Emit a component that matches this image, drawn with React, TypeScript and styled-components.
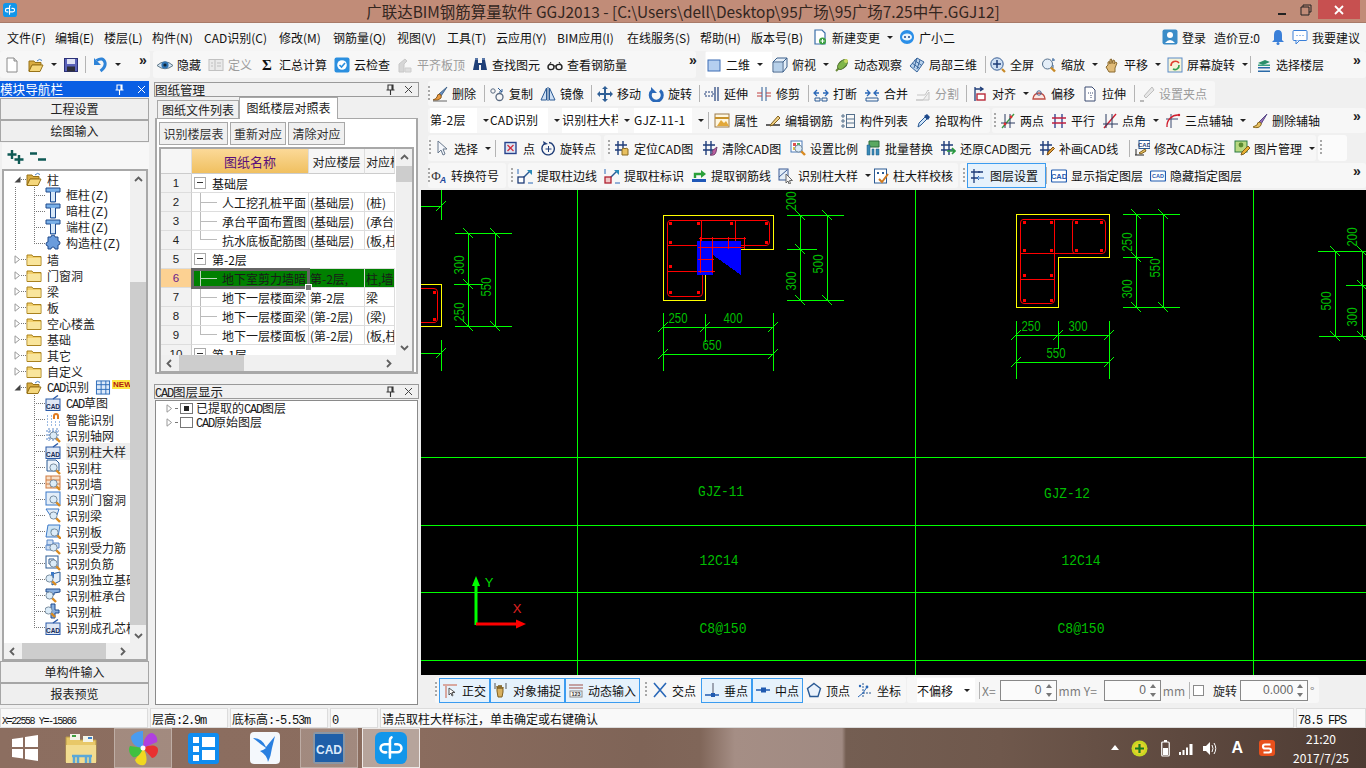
import React from "react";
import styled, { createGlobalStyle } from "styled-components";

const CJK = `"Noto Sans CJK SC", "Noto Sans", sans-serif`;

const Global = createGlobalStyle`
  html, body { margin: 0; padding: 0; width: 1366px; height: 768px; overflow: hidden; background: #f0f0f0; }
  * { box-sizing: border-box; }
  body { font-family: ${CJK}; font-size: 12px; color: #111; }
`;

/* ---------- icons ---------- */
const mag = (x = 0, y = 0) => (
  <g transform={`translate(${x} ${y})`}>
    <path d="M11 11l4 4" stroke="#d98a20" strokeWidth="2.4" />
    <circle cx="8.5" cy="8.5" r="3.6" fill="#dcecf8" stroke="#7a8ea0" />
  </g>
);
const cadDoc = (
  <>
    <rect x="1" y="4" width="14" height="11.5" fill="#dfe8f5" stroke="#2a5aa8" />
    <path d="M8 4l5-3.5" stroke="#2a5aa8" strokeWidth="1.4" />
    <text x="8" y="13.5" fontSize="6.5" fontWeight="700" fontFamily="Liberation Sans" textAnchor="middle" fill="#152a55">CAD</text>
  </>
);
const hash = (c = "#1f3d7a") => (
  <path d="M4 1v14M9 1v14M1 5h12M1 10h12" stroke={c} strokeWidth="1.4" fill="none" />
);
const folderClosed = (
  <>
    <path d="M1 4h5l1 1.5h8v9H1z" fill="#f2cf6a" stroke="#a9821f" />
    <path d="M1.5 7h13v7h-13z" fill="#f9e59c" />
  </>
);
const I: Record<string, React.ReactNode> = {
  new: (<><path d="M3 1h7l3 3v11H3z" fill="#fff" stroke="#8a8a8a" /><path d="M10 1v3h3" fill="#ddd" stroke="#8a8a8a" /></>),
  open: (<><path d="M1 4h5l1 1.5h6V8H4l-3 6z" fill="#d9ac42" stroke="#987318" /><path d="M4 8h11l-3 6.5H1z" fill="#f5d77c" stroke="#987318" /><path d="M9 4q2.5-3 5-.5" stroke="#4a84c4" fill="none" /></>),
  save: (<><rect x="1.5" y="1.5" width="13" height="13" fill="#5a62b8" stroke="#2c3278" /><rect x="4" y="2" width="8" height="5" fill="#dfe2f4" /><rect x="4" y="9.5" width="8" height="5" fill="#2e2e3a" /></>),
  undo: (<><path d="M4.5 3.5Q11-.5 13 5.5 14 10 8.5 14" stroke="#2f84d8" strokeWidth="3" fill="none" /><path d="M2 1v7h7z" fill="#2f84d8" /></>),
  eye: (<><path d="M0 8.5Q8 1 16 8.5 8 15 0 8.5z" fill="#d4e4f2" stroke="#607888" /><circle cx="8" cy="8" r="3.6" fill="#2f74b4" /><circle cx="8" cy="8" r="1.6" fill="#102638" /></>),
  def: (<><rect x="1" y="2.5" width="14" height="11" fill="#e8e8e8" stroke="#b4b4b4" /><path d="M7 3v10M3 6h2M3 9h2M9 6h4M9 9h4" stroke="#b0b0b0" /></>),
  sigma: (<text x="8" y="13" fontSize="15" fontWeight="700" fontFamily="Liberation Serif" textAnchor="middle" fill="#111">Σ</text>),
  cloud: (<><rect x="0.5" y="0.5" width="15" height="15" rx="2" fill="#2b8fdf" /><circle cx="8" cy="8" r="4.8" fill="#fff" /><path d="M5.5 8l2 2 3.5-4" stroke="#2b8fdf" strokeWidth="1.6" fill="none" /></>),
  flush: (<><path d="M2 15V7l6-5 2 2-3 3v8z" fill="#cfcfcf" stroke="#bdbdbd" /><path d="M8 15v-4h6v4z" fill="#d8d8d8" stroke="#c4c4c4" /></>),
  binoc: (<><path d="M3 3h3v3h4V3h3l2 10H9V8H7v5H1z" fill="#1f3f78" /><rect x="3" y="1" width="3" height="2" fill="#5a78a8" /><rect x="10" y="1" width="3" height="2" fill="#5a78a8" /></>),
  glasses: (<><ellipse cx="4" cy="10" rx="3" ry="2.6" fill="none" stroke="#222" strokeWidth="1.4" /><ellipse cx="12" cy="10" rx="3" ry="2.6" fill="none" stroke="#222" strokeWidth="1.4" /><path d="M7 9h2M2 8L4 5M14 8l-2-3" stroke="#222" /></>),
  plane: (<rect x="2" y="3" width="12" height="11" fill="#b5cff0" stroke="#3c6db4" />),
  persp: (<><path d="M1 5l4-4h10v9l-4 5H1z" fill="#e4eef8" stroke="#3a5f8a" /><path d="M1 5h10v10M11 5l4-4" stroke="#3a5f8a" fill="none" /><path d="M2 6h8v8H2z" fill="#b6d0ea" /></>),
  orbit: (<><path d="M2 14L13 3" stroke="#6a8a3a" strokeWidth="2" /><ellipse cx="8.5" cy="7.5" rx="6" ry="3.5" transform="rotate(-45 8.5 7.5)" fill="#7fb548" stroke="#4a6a2a" /><circle cx="12" cy="4" r="2" fill="#c8d860" /></>),
  local3d: (<><path d="M8 1l7 4-7 10-7-6z" fill="#b9d2ec" stroke="#39669c" /><path d="M5 3l7 5M3 6l7 5M8 1L5 11M11 3l-3 9" stroke="#39669c" fill="none" /></>),
  full: (<><circle cx="7" cy="7" r="6.2" fill="#cfe0f4" stroke="#3a5f94" /><path d="M7 3v8M3 7h8" stroke="#1f3d78" strokeWidth="1.5" /><path d="M12 12l3 3" stroke="#c88a28" strokeWidth="2.2" /></>),
  zoom: (<><circle cx="6.5" cy="7" r="5" fill="#e4eef8" stroke="#55708c" /><path d="M10 10.5l4 4" stroke="#c88a28" strokeWidth="2.4" /><path d="M12 1v3M14 3h-3M12 8v3" stroke="#39669c" /></>),
  pan: (<path d="M4 8V5l1.5-.5L6 7V2.5L7.5 2 8 6.5 9 3l1.5.5L10 7l1.5-2L13 6l-2 5v4H5l-3-5 1-1z" fill="#e0bb78" stroke="#8a6a30" />),
  srot: (<><rect x="1" y="1" width="14" height="14" fill="#f7f3d8" stroke="#5a8cc8" /><path d="M4 9a4.5 4.5 0 0 1 8-3" stroke="#e04030" strokeWidth="1.6" fill="none" /><path d="M12 8a4 4 0 0 1-6 4" stroke="#30a050" strokeWidth="1.6" fill="none" /></>),
  layersel: (<><path d="M2 6l7-3 5 2-7 3z" fill="#2b8f6a" /><path d="M2 10h12v1.5H2z" fill="#2a6aa8" /><path d="M2 13.5h12V15H2z" fill="#2a6aa8" /><path d="M2 7.5h12V9H2z" fill="#36a080" /></>),
  del: (<><path d="M15 1L7 8l2 2z" fill="#6a92c8" stroke="#44668c" /><path d="M8 8q-3 0-3 3-1 2-4 3 6 1 8-2 1-2-1-4z" fill="#e89a40" stroke="#8a5a20" /><path d="M1 15h14" stroke="#666" /></>),
  copy: (<><circle cx="4" cy="5" r="2.2" fill="none" stroke="#5a6a80" /><circle cx="10.5" cy="11" r="3.5" fill="none" stroke="#5a6a80" strokeWidth="1.3" /><path d="M9 2l4 4M13 3v3h-3" stroke="#2a5a94" fill="none" /></>),
  mirror: (<><path d="M6.5 2L1 14h5.5z" fill="#cfe0f4" stroke="#2a5a94" /><path d="M9.5 2L15 14H9.5z" fill="#cfe0f4" stroke="#2a5a94" /><path d="M8 1v14" stroke="#2a5a94" /></>),
  move: (<path d="M8 0l3 3H9v4h4V5l3 3-3 3V9H9v4h2l-3 3-3-3h2V9H3v2L0 8l3-3v2h4V3H5z" fill="#2f5f96" />),
  rotate: (<><path d="M4.5 4.5a6 6 0 1 0 7.5 0" stroke="#2a68b8" strokeWidth="3" fill="none" /><path d="M3 1v6h6z" fill="#2a68b8" /></>),
  extend: (<><path d="M14 1v14M11 1v14" stroke="#1f3d78" strokeWidth="1.2" /><path d="M1 6h8v4H1z" fill="none" stroke="#1f3d78" strokeDasharray="2 1" /></>),
  trim: (<><path d="M6 1v14M10 1v14" stroke="#2a5a94" /><path d="M1 7h5M1 10h5M10 7h5M10 10h5" stroke="#c04040" /></>),
  brk: (<><path d="M2 12h5v3H2zM9 12h5v3H9z" fill="none" stroke="#2a5a94" /><path d="M1 7h5M10 7h5M4 4L1 7l3 3M12 4l3 3-3 3" stroke="#2a68b8" fill="none" strokeWidth="1.3" /></>),
  merge: (<><path d="M2 12h12v3H2z" fill="none" stroke="#2a5a94" /><path d="M1 7h5M10 7h5M3 4l3 3-3 3M13 4l-3 3 3 3" stroke="#2a68b8" fill="none" strokeWidth="1.3" /></>),
  split: (<><path d="M1 14h13V6L8 14H1z" fill="#eee" stroke="#bbb" /><path d="M2 9h8l3-5 1 1" stroke="#bbb" fill="none" /></>),
  align: (<><path d="M3 1v14M3 3l8 0M8 1l3 2-3 2" stroke="#1f3d78" fill="none" strokeWidth="1.3" /><rect x="5" y="8" width="8" height="6" fill="#fff" stroke="#b82838" strokeWidth="1.4" /></>),
  offset: (<><path d="M2 13a6 6 0 1 1 12 0z" fill="#fbe8e4" stroke="#c05048" strokeWidth="1.4" /><circle cx="8" cy="7" r="2.2" fill="none" stroke="#406090" /></>),
  stretch: (<><path d="M3 1h7l3 3v11H3z" fill="#fff" stroke="#3a4a70" /><path d="M6 7h6M9 9v3" stroke="#3a4a70" strokeDasharray="1 1" /></>),
  grippt: (<><path d="M13 1L5 10l2 2 8-8z" fill="#e4e4e4" stroke="#b0b0b0" /><path d="M1 15h4" stroke="#aaa" strokeWidth="2" /></>),
  prop: (<><rect x="1" y="1" width="14" height="13" fill="#fff7e0" stroke="#9a7a4a" /><path d="M1 5h14" stroke="#c8922a" strokeWidth="2" /><path d="M3 13l4-6 3 3 2-2 3 5z" fill="#e2a83a" /></>),
  rebar: (<><path d="M1 12h14" stroke="#222" strokeWidth="1.4" /><path d="M6 11l7-8 2 2-7 7-3 1z" fill="#f0d080" stroke="#806020" /></>),
  list: (<><path d="M2 2h2v2H2zM2 7h2v2H2zM2 12h2v2H2z" fill="none" stroke="#55708c" /><rect x="6.5" y="1.5" width="8" height="13" fill="none" stroke="#55708c" /><path d="M7 6h7M7 10h7" stroke="#55708c" /></>),
  pick: (<><path d="M3 14l1-4 6-6 2 2-6 6z" fill="#cfe4f8" stroke="#2a5a94" /><path d="M9 3l3-2 3 3-2 3z" fill="#1f4a8c" /></>),
  twopt: (<><path d="M2 15L14 1" stroke="#3a9a40" strokeWidth="1.3" /><path d="M5 1v14M10 1v14M1 10h14" stroke="#2a3a60" /><circle cx="5" cy="11" r="1.4" fill="#e03030" /><circle cx="11" cy="4" r="1.4" fill="#e03030" /></>),
  parallel: (<><path d="M4 1v14M11 1v14" stroke="#2a3a8a" strokeWidth="1.3" /><path d="M1 5h14M1 10h14" stroke="#c02040" strokeWidth="1.3" /></>),
  angle: (<><path d="M2 15L14 1" stroke="#d02030" strokeWidth="1.4" /><path d="M1 11h15M4 1v14M10 1v14" stroke="#2a3a60" /></>),
  threeax: (<><path d="M1 6h12M6 1v14" stroke="#3a4a70" /><path d="M2 14a11 11 0 0 1 12-12" stroke="#d02030" strokeWidth="1.4" fill="none" /><circle cx="14" cy="2" r="1.2" fill="#d02030" /></>),
  delax: (<><path d="M15 1L7 9l2 2z" fill="#9a70b8" stroke="#5a4a88" /><path d="M8 9q-3 0-3 3l-4 2q6 2 8-2 1-1-1-3z" fill="#e8c060" stroke="#8a6a20" /></>),
  cursor: (<path d="M4 1v12l3-3 2 5 2-1-2-5h4z" fill="#f4f7fc" stroke="#68788c" />),
  point: (<><rect x="2" y="2.5" width="11" height="11" fill="#dde6f5" stroke="#27428c" strokeWidth="1.4" /><path d="M4.5 5l6 6M10.5 5l-6 6" stroke="#d03040" strokeWidth="1.3" /></>),
  rotpt: (<><path d="M4 4a6.2 6.2 0 1 0 5-1.5" stroke="#1f3d78" strokeWidth="1.4" fill="none" /><path d="M3 1l1 4 4-1z" fill="#1f3d78" /><path d="M8.5 6v6M5.5 9h6" stroke="#1f3d78" /></>),
  locate: (<>{hash("#1f3d7a")}<path d="M8 15V9l2-1 1 1 1-1 2 1v6z" fill="#e8c060" stroke="#8a6a20" /></>),
  clear: (<>{hash("#1f3d7a")}<path d="M15 7l-5 4 1 2-3 2q5 1 6-3z" fill="#c060a0" stroke="#704070" /></>),
  scale: (<><rect x="1" y="1" width="11" height="11" fill="#fff" stroke="#4a7ab8" /><path d="M3 3h3v3H3z" fill="#e05050" /><path d="M7 3h3v3H7z" fill="#50b060" /><path d="M3 7h3v3H3z" fill="#e8c040" />{mag()}</>),
  batch: (<><path d="M4 1h10v6H4z" fill="#5aa860" stroke="#2a6a38" /><path d="M2 5v10h3V5zM7 9v6h2V9zM11 9v6h3V9z" fill="#3a8ab8" stroke="#1f5a80" strokeWidth=".5" /></>),
  restore: (<>{hash("#1f3d7a")}<path d="M7 11h8M12 8l3 3-3 3" stroke="#2a9a40" strokeWidth="1.6" fill="none" /></>),
  redraw: (<>{hash("#1f3d7a")}<path d="M8 15l1-3 5-5 1.5 1.5-5 5z" fill="#e0a040" stroke="#805010" /></>),
  editcad: (<><rect x="5" y="0.5" width="11" height="8" fill="#fff" stroke="#2a5a94" /><text x="10.5" y="7" fontSize="6" fontWeight="700" fontFamily="Liberation Sans" textAnchor="middle" fill="#1f3d78">CAD</text><path d="M1 15h9M2 9v6" stroke="#222" /><path d="M5 13l6-4 1 2-5 3z" fill="#e8c060" stroke="#806020" /></>),
  imgm: (<><rect x="1" y="1" width="12" height="11" fill="#b8d880" stroke="#2a7a40" /><circle cx="7" cy="5" r="2.4" fill="#5a8a30" /><path d="M7 15l1-3 6-6 2 2-6 6z" fill="#e8b030" stroke="#806020" /></>),
  symbol: (<><text x="5" y="12" fontSize="13" fontFamily="Liberation Serif" textAnchor="middle" fill="#333">Φ</text><text x="12" y="15" fontSize="9" fontWeight="700" fontStyle="italic" fontFamily="Liberation Sans" textAnchor="middle" fill="#1f4a9c">A</text></>),
  xedge: (<><path d="M2 14L13 3" stroke="#2a5a94" strokeWidth="1.5" /><rect x="1" y="9" width="6" height="6" fill="#fff" stroke="#1f3d78" strokeWidth="1.3" /><path d="M10 2h5v5z" fill="#2a8ab8" /><path d="M1 1v5M11 15h5" stroke="#2a68b8" /></>),
  xlabel: (<><path d="M2 14L13 3" stroke="#2a5a94" strokeWidth="1.5" /><rect x="1" y="9" width="6" height="6" fill="#f0c8c8" stroke="#b02030" strokeWidth="1.3" /><path d="M10 2h5v5z" fill="#2a8ab8" /><path d="M1 1v5M11 15h5" stroke="#2a68b8" /></>),
  xrebar: (<><rect x="1" y="11" width="14" height="3" fill="#2058b8" /><path d="M4 10V6h7" stroke="#2aa03a" strokeWidth="2.4" fill="none" /><path d="M10 2l5 4-5 4z" fill="#2aa03a" /></>),
  recog: (<><rect x="1" y="1" width="9" height="11" fill="#e4eef8" stroke="#3a5a94" /><path d="M1 9l8-7" stroke="#3a5a94" /><path d="M8 6v9l2-2 1 3 1.5-.5-1-3h3z" fill="#f4f4f4" stroke="#666" /></>),
  verify: (<><rect x="1.5" y="1" width="12" height="14" fill="#fff" stroke="#2a5a94" /><path d="M4 4h2v2H4zM9 4h2v2H9z" fill="#2a5a94" /><path d="M6 11l3 3 6-8" stroke="#d07a20" strokeWidth="2" fill="none" /></>),
  layers: (<><path d="M4 1v14M9 3v2M1 4h12M1 10h6" stroke="#1f3d7a" strokeWidth="1.3" /><path d="M14 10H7l2-2M7 10l2 2" stroke="#2a68b8" fill="none" /></>),
  showcad: (<><rect x="0.5" y="2" width="15" height="12" rx="1" fill="#fff" stroke="#1f5ab0" strokeWidth="1.2" /><text x="8" y="11" fontSize="7.5" fontWeight="700" fontFamily="Liberation Sans" textAnchor="middle" fill="#1f5ab0">CAD</text></>),
  hidecad: (<><rect x="0.5" y="3" width="15" height="10" rx="1" fill="#fff" stroke="#1f5ab0" strokeWidth="1.2" /><text x="8" y="10.3" fontSize="5.5" fontWeight="700" fontFamily="Liberation Sans" textAnchor="middle" fill="#1f5ab0">CAD</text></>),
  ortho: (<><path d="M1 2h14v2H5v12H3V4H1z" fill="#d8a8a0" /><path d="M7 6v7l2-2 1 3 1-.5-1-3h3z" fill="#fff" stroke="#555" /></>),
  osnap: (<><path d="M2 1v6M13 1v6" stroke="#555" /><path d="M4 9V4l1 3 1-4 1 4 1-4 1 4 1-2v5l-1 5H5z" fill="#d8b060" stroke="#806020" /></>),
  dyn: (<><path d="M1 3h14M1 6h14" stroke="#a05048" /><rect x="2" y="9" width="12" height="6" fill="#fff" stroke="#888" /><text x="8" y="14" fontSize="5.5" fontFamily="Liberation Sans" fontWeight="700" textAnchor="middle" fill="#333">123</text></>),
  cross: (<path d="M2 1l12 14M14 1L2 15" stroke="#2a68b8" strokeWidth="1.6" />),
  perp: (<><path d="M1 13h14" stroke="#1f5ab0" strokeWidth="1.5" /><path d="M9 1v12" stroke="#556" /><rect x="7" y="11" width="4" height="4" fill="#1f5ab0" /></>),
  mid: (<><path d="M1 8h14" stroke="#1f5ab0" strokeWidth="1.5" /><rect x="6" y="5.5" width="5" height="5" fill="#1f5ab0" /></>),
  vertex: (<path d="M8 1.5l6.5 5-2.5 8H4l-2.5-8z" fill="#eaf2fb" stroke="#2a5a94" strokeWidth="1.4" />),
  coord: (<><path d="M6 1v14M6 11h9" stroke="#2a5a94" strokeDasharray="2 1" /><path d="M1 15l5-4 4-6" stroke="#2a68b8" fill="none" /><circle cx="10" cy="5" r="1.4" fill="#2a68b8" /><circle cx="3" cy="4" r="1.2" fill="#2a68b8" /></>),
  tcol: (<><path d="M1 1h14v4h-4.5v10h-5V5H1z" fill="#7ab0e8" stroke="#1f4a8c" /><path d="M6 5h4v9H6z" fill="#d8e8f8" /></>),
  puzzle: (<path d="M3 2h3a2 2 0 0 1 4 0h3v4a2 2 0 0 1 0 4v4H10a2 2 0 0 0-4 0H3v-3a2 2 0 0 1 0-4z" fill="#6a9cdc" stroke="#1f4a8c" />),
  cadDoc,
  smart: (<><path d="M2 8h1M6 8h1M2 11h1M6 11h1M10 11h1M14 11h1M2 14h1M6 14h1M10 14h1M14 14h1M2 5h1M6 5h1" stroke="#3a78c8" /><path d="M8 8V5a3 3 0 0 1 6 0v3h-2V5a1 1 0 0 0-2 0v3z" fill="#e07a20" /></>),
  rgrid: (<><path d="M1 4h13M1 8h13M1 12h13M4 1v13M8 1v13M12 1v13" stroke="#5a88c8" strokeDasharray="2 1" />{mag()}</>),
  rcol: (<><path d="M4 1h7l3 3v8H2V1z" fill="#eef4fb" stroke="#2a5a94" />{mag()}</>),
  rwall: (<><rect x="1" y="1" width="14" height="12" fill="#f8e0c8" stroke="#d07a40" /><path d="M1 5h14M1 9h14M6 1v4M11 5v4M6 9v4" stroke="#d07a40" />{mag()}</>),
  rdoor: (<><rect x="1" y="1" width="14" height="13" fill="#e4eef8" stroke="#3a78c8" />{mag()}</>),
  rbeam: (<><path d="M1 2h13l-2 6H5z" fill="#e4eef8" stroke="#3a78c8" />{mag()}</>),
  rslab: (<><path d="M3 2h12l-2 12H1z" fill="#cfe4f4" stroke="#3a78c8" /><circle cx="8" cy="8" r="2.6" fill="#8ac8e8" />{mag(1, 1)}</>),
  rforce: (<><path d="M2 1h6v5H2zM1 6h6v5H1zM8 4h6v5H8z" fill="#cfe0f4" stroke="#5a88c8" />{mag()}</>),
  rneg: (<><rect x="1" y="1" width="12" height="12" fill="#fff" stroke="#2a5a94" /><path d="M4 4h5v5H4z" fill="none" stroke="#2a5a94" />{mag()}</>),
  rbase: (<><path d="M7 3l8-2v9l-8 4z" fill="#e4eef8" stroke="#2a5a94" /><path d="M6 1h3v6H6z" fill="#3a78c8" />{mag(-4, -1)}</>),
  rcap: (<><path d="M1 2h14v3l-6 1v2H4V5H1z" fill="#8ab0e0" stroke="#1f4a8c" />{mag(-4, 0)}</>),
  rpile: (<><path d="M6 1h4v6h4v3H10v5H6z" fill="#8ab0e0" stroke="#1f4a8c" />{mag(-5, -1)}</>),
  cloudfile: (<><path d="M3 1h7l3 3v11H3z" fill="#fff" stroke="#3a6ea8" strokeWidth="1.2" /><circle cx="10.5" cy="12" r="3.5" fill="#3aa040" /><path d="M8.5 12h4M10.5 10v4" stroke="#fff" /></>),
  bot: (<><path d="M8 1c4 0 7 3 7 7 0 4-3 7-7 7s-7-3-7-7c0-4 3-7 7-7z" fill="#2b8fe8" /><ellipse cx="8" cy="8" rx="5" ry="3.6" fill="#eaf4fc" /><circle cx="6" cy="8" r="1" fill="#1f4a8c" /><circle cx="10" cy="8" r="1" fill="#1f4a8c" /></>),
  user: (<><rect x="0.5" y="0.5" width="15" height="15" rx="2" fill="#3a8cc8" /><circle cx="8" cy="6" r="3" fill="#fff" /><path d="M3 14q5-6 10 0z" fill="#fff" /></>),
  bell: (<><path d="M8 1q4 0 4 5v5l2 2H2l2-2V6q0-5 4-5z" fill="#3a7fd8" /><circle cx="8" cy="14.5" r="1.5" fill="#3a7fd8" /></>),
  suggest: (<><rect x="1" y="1.5" width="14" height="10" rx="1" fill="#fff" stroke="#3a7fd8" /><path d="M4 11.5v3.5l3.5-3.5" fill="#fff" stroke="#3a7fd8" /><path d="M4.5 6.5h1M7.5 6.5h1M10.5 6.5h1" stroke="#3a7fd8" /></>),
  folder: folderClosed,
  newcol: (<><rect x="1" y="1" width="14" height="14" fill="#dceafa" stroke="#2a6ab8" /><path d="M6 1v14M11 1v14M1 5h14M1 10h14" stroke="#2a6ab8" /></>),
};

const Svg = styled.svg`
  flex: none;
  display: block;
`;
const Ico = ({ n, s = 16 }: { n: string; s?: number }) => (
  <Svg width={s} height={s} viewBox="0 0 16 16">{I[n]}</Svg>
);

/* ---------- toolbar engine ---------- */
type It = { x: number; k?: string; i?: string; t?: string; d?: boolean; g?: boolean; on?: boolean; w?: number; white?: boolean };
type Seg = { from: number; to: number; white?: boolean; items: It[] };

const T = (x: number, i: string, t?: string, o: Partial<It> = {}): It => ({ x, i, t, ...o });
const Sep = (x: number): It => ({ x, k: "sep" });
const Grip = (x: number): It => ({ x, k: "grip" });
const More = (x: number): It => ({ x, k: "more" });
const Cb = (x: number, w: number, t: string): It => ({ x, k: "combo", w, t });

const Row = styled.div<{ $h: number; $lead: number }>`
  display: flex;
  height: ${(p) => p.$h}px;
  padding-left: ${(p) => p.$lead}px;
  align-items: stretch;
`;
const Bar = styled.div<{ $w: number; $ml: number; $pl: number; $white?: boolean }>`
  flex: none;
  display: flex;
  align-items: center;
  width: ${(p) => p.$w}px;
  margin: 0 0 2px ${(p) => p.$ml}px;
  padding-left: ${(p) => p.$pl}px;
  background: ${(p) => (p.$white ? "#fbfbfb" : "#f7f7f7")};
  border-radius: 3px;
`;
const Tool = styled.div<{ $w: number; $g?: boolean; $on?: boolean; $white?: boolean }>`
  flex: none;
  display: flex;
  align-items: center;
  gap: 4px;
  width: ${(p) => p.$w}px;
  height: ${(p) => (p.$on || p.$white ? "25px" : "auto")};
  padding-left: ${(p) => (p.$on ? "2px" : "0")};
  overflow: hidden;
  white-space: nowrap;
  color: ${(p) => (p.$g ? "#9c9c9c" : "#111")};
  background: ${(p) => (p.$on ? "#e6f2fc" : p.$white ? "#fff" : "transparent")};
  border: ${(p) => (p.$on ? "1px solid #3b9cf0" : "0")};
  ${(p) => (p.$g ? "svg { opacity: .8; }" : "")}
`;
const Drop = styled.span`
  flex: none;
  width: 0;
  height: 0;
  margin-left: 3px;
  border-left: 3px solid transparent;
  border-right: 3px solid transparent;
  border-top: 3.5px solid #222;
`;
const SepLine = styled.div`
  flex: none;
  width: 1px;
  height: 17px;
  background: #b4b4b4;
`;
const SepCell = styled.div<{ $w: number }>`
  flex: none;
  width: ${(p) => p.$w}px;
`;
const GripDots = styled.div`
  flex: none;
  width: 2px;
  height: 16px;
  background: repeating-linear-gradient(#a8a8a8 0 2px, transparent 2px 4px);
`;
const MoreMark = styled.div<{ $w: number }>`
  flex: none;
  width: ${(p) => p.$w}px;
  font: 700 14px/10px "Liberation Sans", sans-serif;
  letter-spacing: -1px;
  margin-top: -10px;
  color: #222;
`;
const ComboCell = styled.div<{ $w: number }>`
  flex: none;
  width: ${(p) => p.$w}px;
  display: flex;
  align-items: center;
  gap: 3px;
`;
const ComboText = styled.div<{ $w: number }>`
  flex: none;
  width: ${(p) => p.$w}px;
  height: 25px;
  line-height: 24px;
  background: #fff;
  overflow: hidden;
  white-space: nowrap;
  letter-spacing: 0.2px;
  color: #111;
`;

const renderItem = (it: It, w: number, key: number) => {
  if (it.k === "sep") return <SepCell key={key} $w={w}><SepLine /></SepCell>;
  if (it.k === "grip") return <SepCell key={key} $w={w}><GripDots /></SepCell>;
  if (it.k === "more") return <MoreMark key={key} $w={w}>»</MoreMark>;
  if (it.k === "combo")
    return (
      <ComboCell key={key} $w={w}>
        <ComboText $w={it.w as number}>{it.t}</ComboText>
        <Drop />
      </ComboCell>
    );
  return (
    <Tool key={key} $w={w} $g={it.g} $on={it.on} $white={it.white}>
      {it.i && <Ico n={it.i} />}
      {it.t && <span>{it.t}</span>}
      {it.d && <Drop />}
    </Tool>
  );
};

const ToolRow = ({ segs, h = 27, origin = 0 }: { segs: Seg[]; h?: number; origin?: number }) => {
  let prev = segs[0].from;
  return (
    <Row $h={h} $lead={segs[0].from - origin}>
      {segs.map((s, si) => {
        const ml = s.from - prev;
        prev = s.to;
        return (
          <Bar key={si} $w={s.to - s.from} $ml={ml} $pl={s.items.length ? s.items[0].x - s.from : 0} $white={s.white}>
            {s.items.map((it, i) => renderItem(it, (i + 1 < s.items.length ? s.items[i + 1].x : s.to) - it.x, i))}
          </Bar>
        );
      })}
    </Row>
  );
};

const row1: Seg[] = [
  { from: 0, to: 150, items: [T(4, "new"), T(28, "open", undefined, { d: true }), T(63, "save"), Sep(85), T(92, "undo", undefined, { d: true }), More(139)] },
  { from: 153, to: 696, items: [T(157, "eye", "隐藏"), T(208, "def", "定义", { g: true }), T(259, "sigma", "汇总计算"), T(334, "cloud", "云检查"), T(397, "flush", "平齐板顶", { g: true }), T(472, "binoc", "查找图元"), T(547, "glasses", "查看钢筋量"), More(689)] },
  { from: 705, to: 1366, items: [T(706, "plane", "二维", { d: true, white: true }), T(772, "persp", "俯视", { d: true }), T(834, "orbit", "动态观察"), T(909, "local3d", "局部三维"), Sep(985), T(990, "full", "全屏"), T(1041, "zoom", "缩放", { d: true }), T(1104, "pan", "平移", { d: true }), T(1167, "srot", "屏幕旋转", { d: true }), Sep(1250), T(1256, "layersel", "选择楼层"), More(1353)] },
];
const row2: Seg[] = [
  { from: 428, to: 1215, items: [Grip(428), T(432, "del", "删除"), Sep(484), T(489, "copy", "复制"), T(540, "mirror", "镜像"), Sep(591), T(597, "move", "移动"), T(648, "rotate", "旋转"), Sep(699), T(704, "extend", "延伸"), T(756, "trim", "修剪"), Sep(808), T(813, "brk", "打断"), T(864, "merge", "合并"), T(915, "split", "分割", { g: true }), Sep(966), T(972, "align", "对齐", { d: true }), T(1031, "offset", "偏移"), T(1082, "stretch", "拉伸"), Sep(1134), T(1139, "grippt", "设置夹点", { g: true })] },
];
const row3: Seg[] = [
  { from: 428, to: 990, items: [Cb(430, 47, "第-2层"), Cb(490, 58, "CAD识别"), Cb(562, 56, "识别柱大样"), Cb(634, 58, "GJZ-11-1"), Sep(708), T(714, "prop", "属性"), T(765, "rebar", "编辑钢筋"), T(840, "list", "构件列表"), T(915, "pick", "拾取构件")] },
  { from: 992, to: 1366, items: [Grip(994), T(1000, "twopt", "两点"), T(1051, "parallel", "平行"), T(1102, "angle", "点角", { d: true }), T(1165, "threeax", "三点辅轴", { d: true }), T(1252, "delax", "删除辅轴"), More(1353)] },
];
const row4: Seg[] = [
  { from: 428, to: 601, items: [Grip(429), T(434, "cursor", "选择", { d: true }), Sep(495), T(503, "point", "点"), T(540, "rotpt", "旋转点")] },
  { from: 604, to: 1316, items: [Grip(608), T(614, "locate", "定位CAD图"), T(702, "clear", "清除CAD图"), T(790, "scale", "设置比例"), T(865, "batch", "批量替换"), T(940, "restore", "还原CAD图元"), T(1039, "redraw", "补画CAD线"), Sep(1129), T(1134, "editcad", "修改CAD标注"), T(1234, "imgm", "图片管理", { d: true })] },
  { from: 1318, to: 1347, white: true, items: [Grip(1320)] },
];
const row5: Seg[] = [
  { from: 428, to: 506, items: [Grip(428), T(431, "symbol", "转换符号")] },
  { from: 508, to: 958, items: [Grip(511), T(517, "xedge", "提取柱边线"), T(604, "xlabel", "提取柱标识"), T(691, "xrebar", "提取钢筋线"), T(778, "recog", "识别柱大样", { d: true }), T(873, "verify", "柱大样校核")] },
  { from: 960, to: 1366, items: [Grip(963), T(967, "layers", "图层设置", { on: true }), Sep(1046), T(1051, "showcad", "显示指定图层"), T(1150, "hidecad", "隐藏指定图层"), More(1353)] },
];

/* ---------- chrome ---------- */
const Page = styled.div`
  width: 1366px;
  height: 768px;
  display: flex;
  flex-direction: column;
  overflow: hidden;
  background: #f0f0f0;
`;
const TitleBar = styled.div`
  height: 23px;
  flex: none;
  display: grid;
  grid-template-columns: 1fr auto 1fr;
  background: #c18c78;
  border-bottom: 1px solid #a87a68;
`;
const AppIcon = styled.div`
  padding: 3px 0 0 3px;
`;
const Title = styled.div`
  font-size: 15.45px;
  line-height: 22px;
  color: #33261f;
  white-space: nowrap;
`;
const WinBtns = styled.div`
  display: flex;
  justify-content: flex-end;
  padding-right: 6px;
`;
const WinBtn = styled.div<{ $close?: boolean }>`
  width: ${(p) => (p.$close ? "42px" : "24px")};
  height: 19px;
  display: flex;
  align-items: center;
  justify-content: center;
  background: ${(p) => (p.$close ? "#c75050" : "transparent")};
`;
const MenuBar = styled.div`
  height: 28px;
  flex: none;
  display: flex;
  align-items: center;
  padding-left: 7px;
  background: #f5f5f5;
  white-space: nowrap;
  color: #111;
`;
const MenuItem = styled.div<{ $w: number }>`
  flex: none;
  width: ${(p) => p.$w}px;
  display: flex;
  align-items: center;
  gap: 4px;
`;
const MenuSpacer = styled.span`
  flex: 1;
`;
const TopTools = styled.div`
  flex: none;
  height: 29px;
`;
const Workspace = styled.div`
  flex: none;
  height: 625px;
  display: flex;
`;

/* ---------- nav ---------- */
const NavCol = styled.div`
  flex: none;
  width: 149px;
  display: flex;
  flex-direction: column;
  padding-top: 1px;
`;
const NavTitle = styled.div`
  height: 16px;
  flex: none;
  display: flex;
  align-items: center;
  padding: 0 3px 0 0;
  color: #fff;
  background: #0a5fe4;
  font-size: 12.6px;
  line-height: 16px;
`;
const PanelTitle = styled.div`
  height: 15px;
  flex: none;
  display: flex;
  align-items: center;
  padding-right: 5px;
  background: #f0f0f0;
  border: 1px solid #9a9a9a;
  font-size: 12.5px;
  color: #222;
  white-space: nowrap;
`;
const TitleText = styled.span`
  flex: 1;
`;
const PinBox = styled.span<{ $g: number }>`
  display: flex;
  gap: ${(p) => p.$g}px;
  align-items: center;
`;
const NavBtn = styled.div<{ $top?: number }>`
  flex: none;
  height: 22px;
  margin-top: ${(p) => p.$top ?? 0}px;
  text-align: center;
  line-height: 20px;
  background: #efefef;
  border: 1px solid #a6a6a6;
  color: #222;
`;
const TreeTools = styled.div`
  flex: none;
  height: 26px;
  margin: 1px 0 0 2px;
  background: #f7f7f7;
  display: flex;
  align-items: center;
  padding-left: 5px;
`;
const TreeFrame = styled.div`
  flex: 1;
  min-height: 0;
  margin: 0 1px 0 2px;
  border: 2px solid #a8a8a8;
  display: flex;
  flex-direction: column;
  background: #fff;
`;
const TreeMain = styled.div`
  flex: 1;
  min-height: 0;
  display: flex;
`;
const TreeList = styled.div`
  flex: 1;
  min-width: 0;
  overflow: hidden;
  margin-left: -4px;
`;
const TreeGroup = styled.div<{ $more?: boolean }>`
  padding-left: 34px;
  background:
    ${(p) => (p.$more ? "repeating-linear-gradient(#777 0 1px, transparent 1px 2px) 15px 0 / 1px 100% no-repeat," : "")}
    repeating-linear-gradient(#777 0 1px, transparent 1px 2px) 34px 0 / 1px calc(100% - 8px) no-repeat;
`;
const TopRow = styled.div`
  height: 16px;
  display: flex;
  align-items: center;
  white-space: nowrap;
  padding-left: 14px;
`;
const ExpSvg = styled.svg`
  flex: none;
  display: block;
`;
const Expander = ({ open }: { open?: boolean }) => (
  <ExpSvg width="7" height="9" viewBox="0 0 7 9">
    {open ? <path d="M6.5 1.5v6H0.5z" fill="#444" /> : <path d="M1 .8l4.6 3.7L1 8.2z" fill="#fff" stroke="#999" />}
  </ExpSvg>
);
const Dots = styled.span<{ $w: number }>`
  flex: none;
  width: ${(p) => p.$w}px;
  border-bottom: 1px dotted #777;
  margin-top: 1px;
`;
const TreeLabel = styled.span`
  margin-left: 5px;
  color: #1f1f1f;
`;
const ChildRow = styled.div`
  height: 16px;
  display: flex;
  align-items: center;
  white-space: nowrap;
`;
const ChildLabel = styled.span<{ $sel?: boolean }>`
  flex: ${(p) => (p.$sel ? "1" : "none")};
  margin-left: 5px;
  background: ${(p) => (p.$sel ? "#eee" : "transparent")};
  color: #1f1f1f;
`;
const Mono = styled.span<{ $s?: number; $ls?: number }>`
  font-family: "Liberation Mono", monospace;
  font-size: ${(p) => p.$s ?? 12}px;
  letter-spacing: ${(p) => p.$ls ?? -1.2}px;
`;
const NewBadge = styled.span`
  display: inline-block;
  height: 9px;
  margin: -6px 0 0 1px;
  padding: 0 1px;
  font: 700 8px/9px "Liberation Sans", sans-serif;
  color: #b02010;
  background: #ffe840;
`;

const VScroll = styled.div`
  flex: none;
  width: 16px;
  display: flex;
  flex-direction: column;
  align-items: stretch;
  background: #f0f0f0;
`;
const HScroll = styled.div`
  flex: none;
  height: 16px;
  display: flex;
  align-items: stretch;
  background: #f0f0f0;
`;
const ScrollGap = styled.div<{ $v: number }>`
  flex: ${(p) => (p.$v < 0 ? 1 : "none")};
  ${(p) => (p.$v >= 0 ? `height: ${p.$v}px;` : "")}
`;
const HGap = styled.div<{ $v: number }>`
  flex: ${(p) => (p.$v < 0 ? 1 : "none")};
  ${(p) => (p.$v >= 0 ? `width: ${p.$v}px;` : "")}
`;
const Thumb = styled.div<{ $h?: number; $w?: number }>`
  flex: none;
  background: #cdcdcd;
  ${(p) => (p.$h ? `height: ${p.$h}px;` : "")}
  ${(p) => (p.$w ? `width: ${p.$w}px;` : "")}
`;
const ArrowBox = styled.div`
  flex: none;
  width: 16px;
  height: 16px;
  display: flex;
  align-items: center;
  justify-content: center;
`;
const Chev = ({ d }: { d: "u" | "d" | "l" | "r" }) => (
  <ArrowBox>
    <svg width="9" height="9" viewBox="0 0 9 9">
      <path
        d={{ u: "M1 6l3.5-3.5L8 6", d: "M1 3l3.5 3.5L8 3", l: "M6 1L2.5 4.5 6 8", r: "M3 1l3.5 3.5L3 8" }[d]}
        fill="none"
        stroke="#606060"
        strokeWidth="1.8"
      />
    </svg>
  </ArrowBox>
);
const Pin = ({ dark }: { dark?: boolean }) => (
  <svg width="9" height="11" viewBox="0 0 9 11">
    <path d="M2 1h5v5H2zM0.5 6h8M4.5 6v5M6 1v5" fill="none" stroke={dark ? "#333" : "#fff"} strokeWidth="1.1" />
  </svg>
);
const Close = ({ dark }: { dark?: boolean }) => (
  <svg width="9" height="9" viewBox="0 0 9 9">
    <path d="M1 1l7 7M8 1L1 8" stroke={dark ? "#444" : "#fff"} />
  </svg>
);

const mixLabel = (s: string) =>
  s.split(/([A-Za-z()]+)/).map((p, i) => (/^[A-Za-z()]+$/.test(p) ? <Mono key={i}>{p}</Mono> : <span key={i}>{p}</span>));

const TopFolder = ({ t, open, extra }: { t: string; open?: boolean; extra?: React.ReactNode }) => (
  <TopRow>
    <Expander open={open} />
    <Dots $w={5} />
    <Ico n={open ? "open" : "folder"} />
    <TreeLabel>{mixLabel(t)}</TreeLabel>
    {extra}
  </TopRow>
);

const Child = ({ i, t, sel }: { i: string; t: string; sel?: boolean }) => (
  <ChildRow>
    <Dots $w={11} />
    <Ico n={i} />
    <ChildLabel $sel={sel}>{mixLabel(t)}</ChildLabel>
  </ChildRow>
);

/* ---------- drawing panel ---------- */
const DrawCol = styled.div`
  flex: none;
  width: 265px;
  margin-left: 5px;
  display: flex;
  flex-direction: column;
  padding-top: 2px;
`;
const TabsRow = styled.div`
  flex: none;
  height: 20px;
  margin-top: 2px;
  display: flex;
  align-items: flex-end;
  padding-left: 3px;
`;
const Tab = styled.div<{ $active?: boolean; $w: number }>`
  width: ${(p) => p.$w}px;
  height: ${(p) => (p.$active ? "22px" : "19px")};
  line-height: ${(p) => (p.$active ? "19px" : "17px")};
  text-align: center;
  background: ${(p) => (p.$active ? "#fff" : "#f0f0f0")};
  border: 1px solid #a8a8a8;
  border-bottom: ${(p) => (p.$active ? "0" : "1px solid #a8a8a8")};
  color: #222;
  position: relative;
  z-index: ${(p) => (p.$active ? 1 : 0)};
`;
const TabBody = styled.div`
  flex: none;
  height: 256px;
  margin: -1px 1px 0 1px;
  border: 2px solid #a8a8a8;
  border-top: 1px solid #a8a8a8;
  background: #fff;
  display: flex;
  flex-direction: column;
  padding: 3px 2px 0 2px;
`;
const BtnRow = styled.div`
  flex: none;
  display: flex;
  gap: 2px;
  height: 23px;
`;
const SmallBtn = styled.div<{ $w: number }>`
  width: ${(p) => p.$w}px;
  text-align: center;
  line-height: 21px;
  background: #f0f0f0;
  border: 1px solid #a8a8a8;
  color: #333;
`;
const TableFrame = styled.div`
  flex: none;
  height: 226px;
  margin-top: 2px;
  width: 255px;
  border: 2px solid #a8a8a8;
  display: flex;
  flex-direction: column;
  background: #fff;
`;
const TableMain = styled.div`
  flex: 1;
  min-height: 0;
  display: flex;
`;
const TableClip = styled.div`
  flex: 1;
  min-width: 0;
  overflow: hidden;
`;
const Grid = styled.div`
  display: grid;
  grid-template-columns: 31px 117px 56px 30px;
  grid-template-rows: 25px;
  grid-auto-rows: 19px;
  width: 234px;
`;
const HeadCell = styled.div<{ $orange?: boolean; $left?: boolean }>`
  height: 25px;
  display: flex;
  align-items: center;
  justify-content: ${(p) => (p.$left ? "flex-start" : "center")};
  padding-left: ${(p) => (p.$left ? "1px" : "0")};
  overflow: hidden;
  white-space: nowrap;
  border-right: 1px solid #ddd;
  border-bottom: 1px solid #ccc;
  color: ${(p) => (p.$orange ? "#5a0f7a" : "#222")};
  background: ${(p) => (p.$orange ? "linear-gradient(#fbd998, #f0c060)" : "#f6f6f6")};
  font-size: ${(p) => (p.$orange ? "13px" : "12px")};
`;
const NumCell = styled.div<{ $sel?: boolean }>`
  display: flex;
  align-items: center;
  justify-content: center;
  background: ${(p) => (p.$sel ? "#fcd192" : "#f2f2f2")};
  color: ${(p) => (p.$sel ? "#6a1a8a" : "#222")};
  border-right: 1px solid #ccc;
  border-bottom: 1px solid #ddd;
  font: 11.5px "Liberation Sans", sans-serif;
`;
const Cell = styled.div<{ $green?: boolean }>`
  display: flex;
  align-items: center;
  overflow: hidden;
  white-space: nowrap;
  padding-left: 1px;
  background: ${(p) => (p.$green ? "#008000" : "#fff")};
  border-right: 1px solid #ddd;
  border-bottom: 1px solid #ddd;
  color: #1a1a1a;
`;
const NameCell = styled(Cell)<{ $sel?: boolean }>`
  padding-left: 0;
  position: relative;
  overflow: visible;
  ${(p) => (p.$sel ? "outline: 3px solid #666; outline-offset: -2px; z-index: 2;" : "")}
`;
const GroupCell = styled.div`
  grid-column: 2 / -1;
  display: flex;
  align-items: center;
  background: #fff;
  border-bottom: 1px solid #ddd;
  padding-left: 2px;
  white-space: nowrap;
`;
const MinusBox = styled.span`
  flex: none;
  width: 12px;
  height: 12px;
  margin-right: 6px;
  border: 1px solid #aaa;
  background: #fff;
  position: relative;
  &::after {
    content: "";
    position: absolute;
    left: 2px;
    right: 2px;
    top: 4px;
    height: 1px;
    background: #333;
  }
`;
const Elbow = styled.span<{ $last?: boolean; $sel?: boolean }>`
  flex: none;
  align-self: flex-start;
  width: 17px;
  height: ${(p) => (p.$last ? "50%" : "100%")};
  margin: 0 5px 0 8px;
  border-left: 1px solid ${(p) => (p.$sel ? "#bcd8bc" : "#bbb")};
  background: linear-gradient(${(p) => (p.$sel ? "#bcd8bc" : "#bbb")}, ${(p) => (p.$sel ? "#bcd8bc" : "#bbb")}) 0 ${(p) => (p.$last ? "100%" : "50%")} / 100% 1px no-repeat;
`;
const Handle = styled.span`
  position: absolute;
  right: -4px;
  bottom: -4px;
  width: 5px;
  height: 5px;
  background: #777;
  border: 1px solid #fff;
  box-sizing: content-box;
`;

const tableRows: any[] = [
  { n: 1, g: "基础层" },
  { n: 2, a: "人工挖孔桩平面", b: "(基础层)", c: "(桩)" },
  { n: 3, a: "承台平面布置图", b: "(基础层)", c: "(承台" },
  { n: 4, a: "抗水底板配筋图", b: "(基础层)", c: "(板,柱", last: true },
  { n: 5, g: "第-2层" },
  { n: 6, a: "地下室剪力墙暗", b: "第-2层,", c: "柱,墙", sel: true },
  { n: 7, a: "地下一层楼面梁", b: "第-2层", c: "梁" },
  { n: 8, a: "地下一层楼面梁", b: "(第-2层)", c: "(梁)" },
  { n: 9, a: "地下一层楼面板", b: "(第-2层)", c: "(板,柱", last: true },
  { n: 10, g: "第-1层" },
];

const LayerPanelTitle = styled(PanelTitle)`
  margin-top: 10px;
`;
const LayerBody = styled.div`
  flex: 1;
  min-height: 0;
  margin: 1px 1px 0 1px;
  border: 1px solid #8a8a8a;
  background: #fff;
  padding: 0 0 0 10px;
`;
const LayerRow = styled.div`
  height: 14px;
  display: flex;
  align-items: center;
  white-space: nowrap;
  color: #1a1a1a;
`;
const CheckBox = styled.span<{ $on?: boolean }>`
  flex: none;
  width: 13px;
  height: 11px;
  margin: 0 3px;
  border: 1px solid #777;
  background: #fff;
  display: flex;
  align-items: center;
  justify-content: center;
  &::after {
    content: "";
    width: 5px;
    height: 5px;
    background: ${(p) => (p.$on ? "#222" : "transparent")};
  }
`;
const SmallDots = styled.span`
  flex: none;
  width: 2px;
  border-bottom: 1px dotted #777;
  margin-left: 2px;
`;

/* ---------- main ---------- */
const MainCol = styled.div`
  flex: 1;
  min-width: 0;
  margin-left: 2px;
  display: flex;
  flex-direction: column;
`;
const RowStack = styled.div`
  flex: none;
  height: 110px;
  padding-top: 1px;
`;
const CanvasBox = styled.div`
  flex: none;
  height: 485px;
  background: #000;
`;
const SnapRow = styled.div`
  flex: none;
  height: 30px;
  display: flex;
  align-items: center;
`;
const SnapBar = styled.div<{ $ml: number; $w: number }>`
  flex: none;
  width: ${(p) => p.$w}px;
  margin-left: ${(p) => p.$ml}px;
  height: 26px;
  display: flex;
  align-items: center;
  background: #f7f7f7;
  border-radius: 3px;
`;
const SnapText = styled.span<{ $ml: number; $g?: boolean }>`
  flex: none;
  margin-left: ${(p) => p.$ml}px;
  color: ${(p) => (p.$g ? "#7c7c7c" : "#222")};
  white-space: nowrap;
`;
const CoordInput = styled.div<{ $ml: number; $w: number }>`
  flex: none;
  width: ${(p) => p.$w}px;
  height: 21px;
  margin-left: ${(p) => p.$ml}px;
  display: flex;
  align-items: center;
  justify-content: flex-end;
  padding-right: 14px;
  border: 1px solid #888;
  background: #fbfbfb;
  color: #666;
  font: 12px "Liberation Sans", sans-serif;
  position: relative;
  &::before, &::after {
    content: "";
    position: absolute;
    right: 4px;
    border-left: 3px solid transparent;
    border-right: 3px solid transparent;
  }
  &::before { top: 3px; border-bottom: 4px solid #777; }
  &::after { bottom: 3px; border-top: 4px solid #777; }
`;
const OffsetCombo = styled.div`
  flex: none;
  width: 58px;
  height: 24px;
  margin-left: 10px;
  background: #fff;
  display: flex;
  align-items: center;
  justify-content: space-between;
  padding-right: 5px;
`;
const MiniCheck = styled.span`
  flex: none;
  width: 11px;
  height: 11px;
  margin-left: 3px;
  border: 1px solid #8a8a8a;
  background: #fff;
`;
const SnapSep = styled.span<{ $ml: number }>`
  flex: none;
  width: 1px;
  height: 17px;
  margin-left: ${(p) => p.$ml}px;
  background: #b4b4b4;
`;

/* ---------- status + task ---------- */
const Status = styled.div`
  flex: none;
  height: 23px;
  display: flex;
  gap: 2px;
  padding-top: 3px;
  background: #f0f0f0;
`;
const StatCell = styled.div<{ $w?: number }>`
  flex: ${(p) => (p.$w ? "none" : 1)};
  width: ${(p) => (p.$w ? `${p.$w}px` : "auto")};
  height: 20px;
  line-height: 19px;
  padding-left: 1px;
  background: #f9f9f9;
  border: 1px solid #dcdcdc;
  white-space: nowrap;
  overflow: hidden;
  color: #111;
`;
const TaskBar = styled.div`
  flex: none;
  height: 40px;
  display: flex;
  align-items: center;
  position: relative;
  color: #fff;
  background: linear-gradient(90deg, #8c6e60 0, #8a6c5e 420px, #7f6457 640px, #806659 700px, #a58e85 735px, #a08a82 842px, #745e52 846px, #6f584c 1000px, #5e493f 1180px, #4d3b33 1366px);
`;
const Slot = styled.div<{ $w: number; $ml?: number; $state?: number }>`
  flex: none;
  width: ${(p) => p.$w}px;
  height: 40px;
  margin-left: ${(p) => p.$ml ?? 0}px;
  display: flex;
  align-items: center;
  justify-content: center;
  background: ${(p) => (p.$state === 2 ? "rgba(255,255,255,.38)" : p.$state === 1 ? "rgba(255,255,255,.2)" : "transparent")};
  border: ${(p) => (p.$state === 2 ? "1px solid rgba(255,255,255,.75)" : p.$state === 1 ? "1px solid rgba(255,255,255,.3)" : "0")};
`;
const Tray = styled.div`
  margin-left: auto;
  display: flex;
  align-items: center;
  height: 40px;
`;
const Clock = styled.div`
  width: 76px;
  margin: 0 7px 0 8px;
  text-align: center;
  font-size: 12px;
  line-height: 19px;
  color: #fff;
`;
const TrayIcon = styled.div<{ $ml: number }>`
  margin-left: ${(p) => p.$ml}px;
  display: flex;
`;
const LetterA = styled.span`
  font: 700 16px/16px "Liberation Sans", sans-serif;
  color: #fff;
`;

/* ---------- canvas drawing ---------- */
const G = "#00ff00";
const TC = "#00bd00";
const L = ({ p, c = G }: { p: number[][]; c?: string }) => (
  <g stroke={c} strokeWidth="1" shapeRendering="crispEdges">
    {p.map((a, i) => (
      <line key={i} x1={a[0]} y1={a[1]} x2={a[2]} y2={a[3]} />
    ))}
  </g>
);
const Tick = ({ pts, dir }: { pts: number[][]; dir: 1 | -1 }) => (
  <g stroke={G} strokeWidth="1">
    {pts.map((a, i) => (
      <line key={i} x1={a[0] - 5} y1={a[1] - 5 * dir} x2={a[0] + 5} y2={a[1] + 5 * dir} />
    ))}
  </g>
);
const Dim = ({ x, y, t, r }: { x: number; y: number; t: string; r?: boolean }) => (
  <text
    x={x}
    y={y}
    fill={TC}
    fontFamily="Liberation Sans"
    fontSize="14"
    textAnchor="middle"
    dominantBaseline="central"
    textLength={19}
    lengthAdjust="spacingAndGlyphs"
    transform={r ? `rotate(-90 ${x} ${y})` : undefined}
  >
    {t}
  </text>
);
const Lbl = ({ x, y, t, w }: { x: number; y: number; t: string; w: number }) => (
  <text x={x} y={y} fill={TC} fontFamily="Liberation Mono" fontSize="14" textAnchor="middle" dominantBaseline="central" textLength={w} lengthAdjust="spacingAndGlyphs">
    {t}
  </text>
);
const Y_ = "#ffff00";
const R_ = "#ff0000";
const RD = ({ pts }: { pts: number[][] }) => (
  <g fill={R_}>
    {pts.map((a, i) => (
      <rect key={i} x={a[0] - 1} y={a[1] - 1} width="3" height="3" />
    ))}
  </g>
);

const Canvas = () => (
  <svg width="945" height="485" viewBox="421 190 945 485" style={{ display: "block" }}>
    <L
      p={[
        [577.5, 190, 577.5, 675], [915.5, 190, 915.5, 675], [1253.5, 190, 1253.5, 675],
        [421, 457.5, 1366, 457.5], [421, 525.5, 1366, 525.5], [421, 592.5, 1366, 592.5], [421, 660.5, 1366, 660.5],
        [441.5, 190, 441.5, 220], [421, 206.5, 441.5, 206.5], [441.5, 340, 441.5, 371], [421, 353.5, 441.5, 353.5],
        [455, 233.5, 512, 233.5], [454, 284.5, 483, 284.5], [455, 326.5, 512, 326.5], [468.5, 233, 468.5, 327], [495.5, 233, 495.5, 327],
        [787, 215.5, 844, 215.5], [787, 249.5, 817, 249.5], [787, 300.5, 844, 300.5], [800.5, 215, 800.5, 301], [827.5, 215, 827.5, 301],
        [663.5, 313, 663.5, 371], [705.5, 314, 705.5, 342], [773.5, 313, 773.5, 371], [663.5, 327.5, 773.5, 327.5], [663.5, 354.5, 773.5, 354.5],
        [1123, 214.5, 1180, 214.5], [1123, 257.5, 1153, 257.5], [1123, 307.5, 1180, 307.5], [1136.5, 214, 1136.5, 308], [1163.5, 214, 1163.5, 308],
        [1016.5, 321, 1016.5, 379], [1058.5, 321, 1058.5, 349], [1109.5, 321, 1109.5, 379], [1016.5, 335.5, 1109.5, 335.5], [1016.5, 362.5, 1109.5, 362.5],
        [1318, 251.5, 1366, 251.5], [1346, 285.5, 1366, 285.5], [1319, 336.5, 1366, 336.5], [1335.5, 251, 1335.5, 337], [1362.5, 251, 1362.5, 337],
      ]}
    />
    <Tick dir={-1} pts={[[441, 206], [441, 353], [663, 327], [705, 327], [773, 327], [663, 354], [773, 354], [1016, 335], [1058, 335], [1109, 335], [1016, 362], [1109, 362]]} />
    <Tick dir={1} pts={[[468, 233], [495, 233], [468, 284], [468, 326], [495, 326], [800, 215], [827, 215], [800, 249], [800, 300], [827, 300], [1136, 214], [1163, 214], [1136, 257], [1136, 307], [1163, 307], [1335, 251], [1362, 251], [1362, 285], [1335, 336], [1362, 336]]} />

    <path d="M421 284.5H441.5V326.5H421" fill="none" stroke={Y_} shapeRendering="crispEdges" />
    <path d="M421 288.5H434Q437.5 288.5 437.5 292V318Q437.5 322.5 434 322.5H421" fill="none" stroke={R_} />
    <RD pts={[[434, 292], [434, 319]]} />

    <polygon points="663.5,215.5 773.5,215.5 773.5,249.5 705.5,249.5 705.5,300.5 663.5,300.5" fill="none" stroke={Y_} shapeRendering="crispEdges" />
    <path d="M670 220.5H766Q769.5 220.5 769.5 224V242Q769.5 245.5 766 245.5H702.5V293Q702.5 296.5 699 296.5H671Q667.5 296.5 667.5 293V224Q667.5 220.5 670 220.5Z" fill="none" stroke={R_} />
    <L c={R_} p={[[701.5, 220, 701.5, 246], [735.5, 220, 735.5, 246], [668, 245.5, 702, 245.5], [668, 271.5, 702, 271.5]]} />
    <RD pts={[[670, 223], [698, 223], [766, 223], [766, 242], [670, 242], [670, 266], [698, 292], [670, 292], [731, 223]]} />
    <polygon points="697,241 741,241 741,275 713,255 713,275 697,275" fill="#0000ff" shapeRendering="crispEdges" />
    <L c={R_} p={[[699, 238.5, 746, 238.5], [698, 247.5, 745, 247.5], [698, 259.5, 714, 259.5], [698, 271.5, 715, 271.5], [700.5, 237, 700.5, 273], [712.5, 237, 712.5, 273], [728.5, 237, 728.5, 249], [744.5, 237, 744.5, 249]]} />

    <polygon points="1016.5,214.5 1109.5,214.5 1109.5,257.5 1058.5,257.5 1058.5,307.5 1016.5,307.5" fill="none" stroke={Y_} shapeRendering="crispEdges" />
    <path d="M1023 219.5H1102Q1105.5 219.5 1105.5 223V250Q1105.5 253.5 1102 253.5H1054.5V300Q1054.5 303.5 1051 303.5H1024Q1020.5 303.5 1020.5 300V223Q1020.5 219.5 1023 219.5Z" fill="none" stroke={R_} />
    <L c={R_} p={[[1054.5, 220, 1054.5, 254], [1021, 253.5, 1055, 253.5], [1021, 279.5, 1055, 279.5]]} />
    <path d="M1075 219.5Q1072.5 219.5 1072.5 222V250Q1072.5 253.5 1075 253.5" fill="none" stroke={R_} />
    <RD pts={[[1024, 222], [1051, 222], [1101, 222], [1024, 250], [1051, 250], [1101, 250], [1024, 275], [1051, 275], [1024, 300], [1051, 300], [1076, 222], [1076, 250]]} />

    <Dim x={459} y={265} t="300" r />
    <Dim x={486} y={287} t="550" r />
    <Dim x={459} y={312} t="250" r />
    <Dim x={791} y={201} t="200" r />
    <Dim x={791} y={281} t="300" r />
    <Dim x={818} y={264} t="500" r />
    <Dim x={678} y={318} t="250" />
    <Dim x={733} y={318} t="400" />
    <Dim x={712} y={345} t="650" />
    <Dim x={1127} y={242} t="250" r />
    <Dim x={1127} y={289} t="300" r />
    <Dim x={1155} y={268} t="550" r />
    <Dim x={1031} y={326} t="250" />
    <Dim x={1078} y={326} t="300" />
    <Dim x={1056} y={353} t="550" />
    <Dim x={1352} y={237} t="200" r />
    <Dim x={1326} y={301} t="500" r />
    <Dim x={1352} y={317} t="300" r />

    <Lbl x={721} y={492} t="GJZ-11" w={46} />
    <Lbl x={1067} y={494} t="GJZ-12" w={46} />
    <Lbl x={719} y={561} t="12C14" w={39} />
    <Lbl x={1081} y={561} t="12C14" w={39} />
    <Lbl x={723} y={629} t="C8@150" w={47} />
    <Lbl x={1081} y={629} t="C8@150" w={47} />

    <path d="M476 625V584" stroke="#00ff00" strokeWidth="3" />
    <path d="M472 586l4-10 4 10z" fill="#00ff00" />
    <path d="M476 624H518" stroke="#ff0000" strokeWidth="3" />
    <path d="M516 619.5l10 4.5-10 4.5z" fill="#ff0000" />
    <text x="489" y="587" fill="#00d800" fontFamily="Liberation Sans" fontSize="13" textAnchor="middle">Y</text>
    <text x="517" y="613" fill="#e02020" fontFamily="Liberation Sans" fontSize="13" textAnchor="middle">X</text>
  </svg>
);

/* ---------- app ---------- */
const menus: [number, string][] = [[7, "文件(F)"], [55, "编辑(E)"], [104, "楼层(L)"], [152, "构件(N)"], [204, "CAD识别(C)"], [279, "修改(M)"], [333, "钢筋量(Q)"], [397, "视图(V)"], [447, "工具(T)"], [496, "云应用(Y)"], [557, "BIM应用(I)"], [627, "在线服务(S)"], [700, "帮助(H)"], [751, "版本号(B)"], [812, ""]];

const GlodonIcon = ({ s }: { s: number }) => (
  <svg width={s} height={s} viewBox="0 0 30 30">
    <rect width="30" height="30" rx="6" fill="#1296ea" />
    <path d="M15.5 5a3 3 0 0 0-1.5 2.5V24" fill="none" stroke="#fff" strokeWidth="2.4" strokeLinecap="round" />
    <path d="M14 11.5H9a3.8 3.8 0 0 0 0 7.6h1.5" fill="none" stroke="#fff" strokeWidth="2.4" strokeLinecap="round" />
    <path d="M14 19h7a3.8 3.8 0 0 0 0-7.6h-2" fill="none" stroke="#fff" strokeWidth="2.4" strokeLinecap="round" />
  </svg>
);

export default function App() {
  return (
    <Page>
      <Global />
      <TitleBar>
        <AppIcon><GlodonIcon s={14} /></AppIcon>
        <Title>广联达BIM钢筋算量软件 GGJ2013 - [C:\Users\dell\Desktop\95广场\95广场7.25中午.GGJ12]</Title>
        <WinBtns>
          <WinBtn>
            <svg width="12" height="12" viewBox="0 0 12 12"><rect x="2" y="9" width="8" height="2" fill="#222" /></svg>
          </WinBtn>
          <WinBtn>
            <svg width="12" height="12" viewBox="0 0 12 12"><path d="M3 3V1h8v7H9M1 3h8v8H1z" fill="none" stroke="#222" /></svg>
          </WinBtn>
          <WinBtn $close>
            <svg width="10" height="10" viewBox="0 0 10 10"><path d="M1 1l8 8M9 1L1 9" stroke="#fff" strokeWidth="1.8" /></svg>
          </WinBtn>
        </WinBtns>
      </TitleBar>

      <MenuBar>
        {menus.slice(0, -1).map(([x, m], i) => <MenuItem key={m} $w={menus[i + 1][0] - x}>{m}</MenuItem>)}
        <MenuItem $w={87}><Ico n="cloudfile" /><span>新建变更</span><Drop /></MenuItem>
        <MenuItem $w={70}><Ico n="bot" /><span>广小二</span></MenuItem>
        <MenuSpacer />
        <MenuItem $w={52}><Ico n="user" /><span>登录</span></MenuItem>
        <MenuItem $w={56}>造价豆:0</MenuItem>
        <MenuItem $w={22}><Ico n="bell" /></MenuItem>
        <MenuItem $w={74}><Ico n="suggest" /><span>我要建议</span></MenuItem>
      </MenuBar>

      <TopTools><ToolRow segs={row1} h={29} /></TopTools>

      <Workspace>
        <NavCol>
          <NavTitle>
            <TitleText>模块导航栏</TitleText>
            <PinBox $g={13}><Pin /><Close /></PinBox>
          </NavTitle>
          <NavBtn $top={1}>工程设置</NavBtn>
          <NavBtn>绘图输入</NavBtn>
          <TreeTools>
            <svg width="44" height="18" viewBox="0 0 44 18">
              <path d="M5 3v9M.5 7.5h9M12 8v9M7.500 12.500h9M23 6.500h7M31 12.500h8" stroke="#0f5a55" strokeWidth="2.4" />
            </svg>
          </TreeTools>
          <TreeFrame>
            <TreeMain>
              <TreeList>
                <TopFolder t="柱" open />
                <TreeGroup $more>
                  <Child i="tcol" t="框柱(Z)" />
                  <Child i="tcol" t="暗柱(Z)" />
                  <Child i="tcol" t="端柱(Z)" />
                  <Child i="puzzle" t="构造柱(Z)" />
                </TreeGroup>
                {["墙", "门窗洞", "梁", "板", "空心楼盖", "基础", "其它", "自定义"].map((t) => <TopFolder key={t} t={t} />)}
                <TopFolder
                  t="CAD识别"
                  open
                  extra={
                    <>
                      <svg width="16" height="15" viewBox="0 0 16 16" style={{ marginLeft: 6, flex: "none" }}>{I.newcol}</svg>
                      <NewBadge>NEW</NewBadge>
                    </>
                  }
                />
                <TreeGroup>
                  <Child i="cadDoc" t="CAD草图" />
                  <Child i="smart" t="智能识别" />
                  <Child i="rgrid" t="识别轴网" />
                  <Child i="cadDoc" t="识别柱大样" sel />
                  <Child i="rcol" t="识别柱" />
                  <Child i="rwall" t="识别墙" />
                  <Child i="rdoor" t="识别门窗洞" />
                  <Child i="rbeam" t="识别梁" />
                  <Child i="rslab" t="识别板" />
                  <Child i="rforce" t="识别受力筋" />
                  <Child i="rneg" t="识别负筋" />
                  <Child i="rbase" t="识别独立基础" />
                  <Child i="rcap" t="识别桩承台" />
                  <Child i="rpile" t="识别桩" />
                  <Child i="cadDoc" t="识别成孔芯柱" />
                </TreeGroup>
              </TreeList>
              <VScroll>
                <Chev d="u" />
                <ScrollGap $v={95} />
                <Thumb $h={343} />
                <ScrollGap $v={-1} />
                <Chev d="d" />
              </VScroll>
            </TreeMain>
            <HScroll>
              <Chev d="l" />
              <HGap $v={2} />
              <Thumb $w={84} />
              <HGap $v={-1} />
              <Chev d="r" />
              <HGap $v={16} />
            </HScroll>
          </TreeFrame>
          <NavBtn>单构件输入</NavBtn>
          <NavBtn>报表预览</NavBtn>
        </NavCol>

        <DrawCol>
          <PanelTitle>
            <TitleText>图纸管理</TitleText>
            <PinBox $g={9}><Pin dark /><Close dark /></PinBox>
          </PanelTitle>
          <TabsRow>
            <Tab $w={82}>图纸文件列表</Tab>
            <Tab $w={99} $active>图纸楼层对照表</Tab>
          </TabsRow>
          <TabBody>
            <BtnRow>
              <SmallBtn $w={69}>识别楼层表</SmallBtn>
              <SmallBtn $w={56}>重新对应</SmallBtn>
              <SmallBtn $w={57}>清除对应</SmallBtn>
            </BtnRow>
            <TableFrame>
              <TableMain>
                <TableClip>
                  <Grid>
                    <HeadCell />
                    <HeadCell $orange>图纸名称</HeadCell>
                    <HeadCell>对应楼层</HeadCell>
                    <HeadCell $left>对应构件</HeadCell>
                    {tableRows.map((r) => (
                      <React.Fragment key={r.n}>
                        <NumCell $sel={r.sel}>{r.n}</NumCell>
                        {r.g ? (
                          <GroupCell><MinusBox />{r.g}</GroupCell>
                        ) : (
                          <>
                            <NameCell $green={r.sel} $sel={r.sel}>
                              <Elbow $last={r.last} $sel={r.sel} />
                              {r.a}
                              {r.sel && <Handle />}
                            </NameCell>
                            <Cell $green={r.sel}>{r.b}</Cell>
                            <Cell $green={r.sel}>{r.c}</Cell>
                          </>
                        )}
                      </React.Fragment>
                    ))}
                  </Grid>
                </TableClip>
                <VScroll>
                  <Chev d="u" />
                  <ScrollGap $v={1} />
                  <Thumb $h={16} />
                  <ScrollGap $v={-1} />
                  <Chev d="d" />
                </VScroll>
              </TableMain>
              <HScroll>
                <Chev d="l" />
                <HGap $v={2} />
                <Thumb $w={65} />
                <HGap $v={-1} />
                <Chev d="r" />
                <HGap $v={16} />
              </HScroll>
            </TableFrame>
          </TabBody>
          <LayerPanelTitle>
            <TitleText>{mixLabel("CAD图层显示")}</TitleText>
            <PinBox $g={9}><Pin dark /><Close dark /></PinBox>
          </LayerPanelTitle>
          <LayerBody>
            <LayerRow><Expander /><SmallDots /><CheckBox $on /><span>{mixLabel("已提取的CAD图层")}</span></LayerRow>
            <LayerRow><Expander /><SmallDots /><CheckBox /><span>{mixLabel("CAD原始图层")}</span></LayerRow>
          </LayerBody>
        </DrawCol>

        <MainCol>
          <RowStack>
            <ToolRow segs={row2} h={27} origin={421} />
            <ToolRow segs={row3} h={27} origin={421} />
            <ToolRow segs={row4} h={28} origin={421} />
            <ToolRow segs={row5} h={27} origin={421} />
          </RowStack>
          <CanvasBox><Canvas /></CanvasBox>
          <SnapRow>
            <SnapBar $ml={14} $w={471}>
              <SepCell $w={4}><GripDots /></SepCell>
              <Tool $w={51} $on><Ico n="ortho" /><span>正交</span></Tool>
              <Tool $w={75} $on><Ico n="osnap" /><span>对象捕捉</span></Tool>
              <Tool $w={75} $on><Ico n="dyn" /><span>动态输入</span></Tool>
              <SepCell $w={5} />
              <SepCell $w={2}><GripDots /></SepCell>
              <SepCell $w={5} />
              <Tool $w={49}><Ico n="cross" /><span>交点</span></Tool>
              <Tool $w={51} $on><Ico n="perp" /><span>垂点</span></Tool>
              <Tool $w={51} $on><Ico n="mid" /><span>中点</span></Tool>
              <SepCell $w={3} />
              <Tool $w={51}><Ico n="vertex" /><span>顶点</span></Tool>
              <Tool $w={44}><Ico n="coord" /><span>坐标</span></Tool>
            </SnapBar>
            <SnapBar $ml={1} $w={412}>
              <OffsetCombo><span>不偏移</span><Drop /></OffsetCombo>
              <SnapSep $ml={4} />
              <SnapText $ml={2} $g>X=</SnapText>
              <CoordInput $ml={4} $w={57}>0</CoordInput>
              <SnapText $ml={2} $g>mm</SnapText>
              <SnapText $ml={3} $g>Y=</SnapText>
              <CoordInput $ml={7} $w={57}>0</CoordInput>
              <SnapText $ml={2} $g>mm</SnapText>
              <SnapSep $ml={4} />
              <MiniCheck />
              <SnapText $ml={9}>旋转</SnapText>
              <CoordInput $ml={3} $w={68}>0.000</CoordInput>
              <SnapText $ml={2} $g>°</SnapText>
            </SnapBar>
          </SnapRow>
        </MainCol>
      </Workspace>

      <Status>
        <StatCell $w={148}><Mono $s={10} $ls={-1.4}>X=22558 Y=-15866</Mono></StatCell>
        <StatCell $w={78}>层高<Mono>:2.9m</Mono></StatCell>
        <StatCell $w={98}>底标高<Mono>:-5.53m</Mono></StatCell>
        <StatCell $w={48}><Mono>0</Mono></StatCell>
        <StatCell>{"请点取柱大样标注\uFF0C单击确定或右键确认"}</StatCell>
        <StatCell $w={70}><Mono>78.5 FPS</Mono></StatCell>
      </Status>

      <TaskBar>
        <Slot $w={50}>
          <svg width="26" height="26" viewBox="0 0 26 26">
            <path d="M0 4l11-1.6V12H0zM13 2.100L26 0v12H13zM0 14h11v9.600L0 22zM13 14h13v12l-13-2z" fill="#fff" />
          </svg>
        </Slot>
        <Slot $w={62}>
          <svg width="34" height="34" viewBox="0 0 34 34">
            <path d="M2 6h12l2 3h16v22H2z" fill="#e8c868" stroke="#b89a48" />
            <rect x="6" y="3" width="10" height="6" fill="#f4f4e8" />
            <rect x="8" y="4" width="4" height="2" fill="#40a040" />
            <rect x="19" y="5" width="10" height="6" fill="#f4f4e8" />
            <rect x="24" y="6" width="4" height="2" fill="#3a80c8" />
            <path d="M2 14h30v18H2z" fill="#f2dc90" />
            <path d="M8 25h20M10 25v7M26 25v7M14 25v7M22 25v7" stroke="#5aa8d8" strokeWidth="2.5" />
          </svg>
        </Slot>
        <Slot $w={58} $ml={2} $state={1}>
          <svg width="32" height="36" viewBox="0 0 32 36">
            <path d="M16 18C8 18 4 12 4 7 6 3 12 1 16 1z" fill="#4a9cf0" />
            <path d="M16 18c0-8 4-15 9-15 4 1 6 6 5 9z" fill="#b040e0" />
            <path d="M16 18c8-4 15-3 15 2 0 4-3 8-6 8z" fill="#e83030" />
            <path d="M16 18c4 6 5 15 1 17-5 1-8-2-9-5z" fill="#f0d820" />
            <path d="M16 18c-2 7-7 10-10 9-4-3-5-8-3-11z" fill="#40c040" />
            <circle cx="16" cy="18" r="2.5" fill="#fff" />
          </svg>
        </Slot>
        <Slot $w={62}>
          <svg width="31" height="31" viewBox="0 0 31 31">
            <rect width="31" height="31" rx="3" fill="#0f8cf0" />
            <rect x="5" y="4" width="6" height="6" fill="#fff" />
            <rect x="5" y="13" width="6" height="6" fill="#fff" />
            <rect x="5" y="22" width="6" height="6" fill="#fff" />
            <rect x="14" y="4" width="13" height="10" fill="#fff" />
            <rect x="14" y="17" width="13" height="10" fill="#fff" />
          </svg>
        </Slot>
        <Slot $w={62}>
          <svg width="30" height="32" viewBox="0 0 30 32">
            <rect width="30" height="32" rx="4" fill="#f4f8fc" />
            <path d="M3 6q9 0 13 9l9-11-3 12q-1 8-4 14-1-7-8-11 4-1 6-3Q10 12 3 6z" fill="#2a80e0" />
          </svg>
        </Slot>
        <Slot $w={58} $ml={4} $state={1}>
          <svg width="32" height="32" viewBox="0 0 32 32">
            <rect width="32" height="32" rx="3" fill="#8a96a4" />
            <rect x="2" y="2" width="28" height="28" fill="#1f5fa8" />
            <text x="16" y="22" textAnchor="middle" fontFamily="Liberation Sans" fontWeight="700" fontSize="12" fill="#dceafa">CAD</text>
          </svg>
        </Slot>
        <Slot $w={58} $ml={4} $state={2}><GlodonIcon s={32} /></Slot>
        <Tray>
          <TrayIcon $ml={0}>
            <svg width="10" height="8" viewBox="0 0 10 8"><path d="M5 1l4 5H1z" fill="#fff" /></svg>
          </TrayIcon>
          <TrayIcon $ml={11}>
            <svg width="17" height="17" viewBox="0 0 17 17"><circle cx="8.5" cy="8.5" r="8" fill="#c8d820" /><circle cx="8.5" cy="8.5" r="5.5" fill="#e8d030" /><path d="M8.5 4v9M4 8.5h9" stroke="#167a20" strokeWidth="2.2" /></svg>
          </TrayIcon>
          <TrayIcon $ml={13}>
            <svg width="9" height="17" viewBox="0 0 9 17"><path d="M3 0h3v2H3z" fill="#fff" /><rect x=".75" y="2" width="7.5" height="14" rx="1" fill="none" stroke="#fff" strokeWidth="1.2" /><rect x="2" y="8" width="5" height="7" fill="#fff" /></svg>
          </TrayIcon>
          <TrayIcon $ml={8}>
            <svg width="16" height="13" viewBox="0 0 16 13"><path d="M1 10h2v3H1zM4.500 8h2v5h-2zM8 5.500h2V13H8zM11.500 2h3v11h-3z" fill="#fff" /></svg>
          </TrayIcon>
          <TrayIcon $ml={8}>
            <svg width="15" height="15" viewBox="0 0 15 15"><path d="M1 5h3l4-4v13l-4-4H1z" fill="#fff" /><path d="M10 4q2 3.500 0 7M12 2q3.500 5.500 0 11" stroke="#fff" fill="none" /></svg>
          </TrayIcon>
          <TrayIcon $ml={14}><LetterA>A</LetterA></TrayIcon>
          <TrayIcon $ml={16}>
            <svg width="16" height="16" viewBox="0 0 16 16"><rect width="16" height="16" rx="3" fill="#e8501c" /><path d="M11.500 4.500H6Q4 4.500 4 6.500T6 8.500H10Q12 8.500 12 10.500T10 12.500H4.500" stroke="#fff" strokeWidth="2.2" fill="none" /></svg>
          </TrayIcon>
          <Clock>21:20<br />2017/7/25</Clock>
        </Tray>
      </TaskBar>
    </Page>
  );
}
